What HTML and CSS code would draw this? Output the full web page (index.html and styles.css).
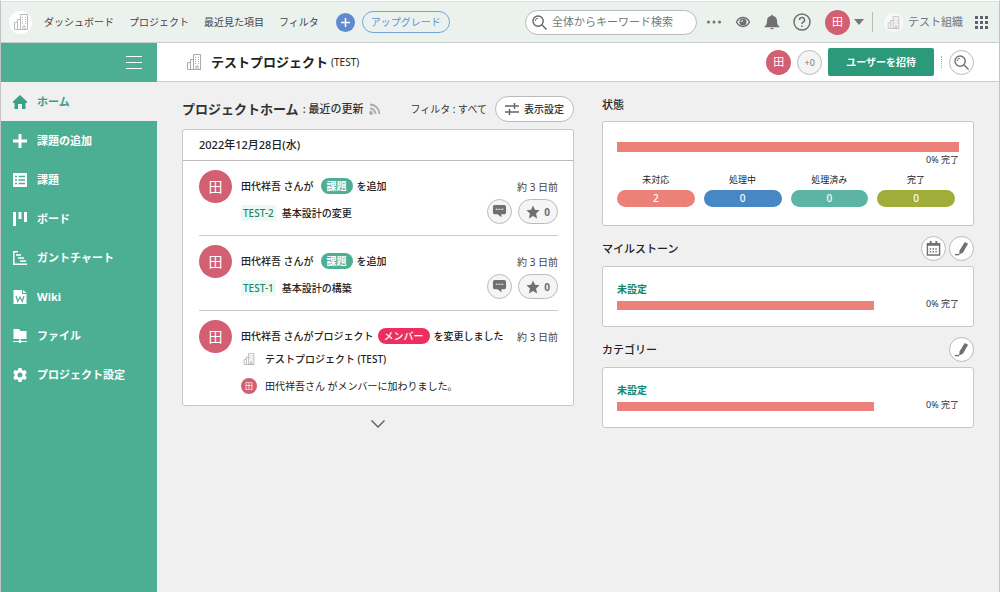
FILE: index.html
```html
<!DOCTYPE html>
<html lang="ja">
<head>
<meta charset="utf-8">
<title>テストプロジェクト</title>
<link rel="stylesheet" href="styles.css">
</head>
<body>
<svg class="defs" aria-hidden="true">
  <symbol id="building" viewBox="0 0 16 16"><g fill="none" stroke="currentColor"><path d="M7.500 15.500V.5h7v15zM7.500 5.500h-3v10M4.500 8.500h-3v7h13M10 15v-3h2v3"/><path stroke-dasharray="1 1" d="M9.500 3v7M12.500 3v7"/></g></symbol>
  <symbol id="search" viewBox="0 0 16 16"><g fill="none" stroke="currentColor" stroke-width="1.500"><circle cx="6.500" cy="6.500" r="5.500"/><path d="M10.500 10.500l5 5"/><path stroke-width="1" d="M3.500 6.500a3 3 0 0 1 3-3"/></g></symbol>
  <symbol id="comment" viewBox="0 0 16 16"><path fill="currentColor" d="M3 1h10a2 2 0 0 1 2 2v6a2 2 0 0 1-2 2h-3v3l-4-3H3a2 2 0 0 1-2-2V3a2 2 0 0 1 2-2z"/><path fill="#fff" d="M4 5h2v1H4zM7 5h2v1H7zM10 5h2v1h-2z"/></symbol>
  <symbol id="star" viewBox="0 0 16 16"><path fill="currentColor" d="M8 .5l2.200 5 5.300.5-4 3.700 1.200 5.800L8 12.600l-4.700 2.900 1.200-5.800-4-3.700 5.300-.5z"/></symbol>
  <symbol id="pencil" viewBox="0 0 16 16"><path fill="currentColor" d="M11.500 1l3.500 1.800-5.500 9.700-4 2 .4-4.300z"/><path fill="none" stroke="currentColor" stroke-width="1.500" d="M1 14.500h4.500"/></symbol>
</svg>

<header class="topbar">
  <a class="round-logo" href="#" aria-label="スペース"><svg class="icon16"><use href="#building"/></svg></a>
  <nav class="topnav">
    <a href="#">ダッシュボード</a>
    <a href="#">プロジェクト</a>
    <a href="#">最近見た項目</a>
    <a href="#">フィルタ</a>
  </nav>
  <button class="add" aria-label="追加"><svg viewBox="0 0 19 19"><path d="M9.500 5v9M5 9.500h9" stroke="#fff" stroke-width="1.500"/></svg></button>
  <button class="upgrade">アップグレード</button>
  <label class="search"><svg class="icon16"><use href="#search"/></svg><input type="text" aria-label="検索" placeholder="全体からキーワード検索"></label>
  <div class="tools">
    <button aria-label="その他"><svg class="icon16" viewBox="0 0 16 16" fill="currentColor"><circle cx="2.500" cy="8" r="1.500"/><circle cx="8" cy="8" r="1.500"/><circle cx="13.500" cy="8" r="1.500"/></svg></button>
    <button aria-label="ウォッチ"><svg class="icon16" viewBox="0 0 16 16"><path fill="none" stroke="currentColor" stroke-width="1.500" d="M1.500 8C4.500 2 11.500 2 14.500 8 11.500 14 4.500 14 1.500 8z"/><circle cx="8" cy="8" r="3.500" fill="currentColor"/><path fill="none" stroke="#fff" d="M6.500 8A1.500 1.500 0 0 1 8 6.500"/></svg></button>
    <button aria-label="お知らせ"><svg class="icon16" viewBox="0 0 16 16" fill="currentColor"><path d="M8 .5l1.300 1.500c2.700.8 3.700 2.500 3.700 5 0 3 1 4.500 2.500 5.500v.8H.5v-.8C2 11.500 3 10 3 7c0-2.500 1-4.200 3.700-5zM6 14h4q-2 2.500-4 0z"/></svg></button>
    <button aria-label="ヘルプ"><svg class="icon18" viewBox="0 0 18 18" fill="none" stroke="currentColor" stroke-width="1.500"><circle cx="9" cy="9" r="8"/><path d="M6.500 7a2.500 2.500 0 1 1 3.500 2.200q-1 .5-1 1.800M9 12.500V14"/></svg></button>
  </div>
  <button class="me" aria-label="アカウント"><span class="avatar avatar-m">田</span><span class="caret"></span></button>
  <a class="org" href="#"><span class="org-logo"><svg><use href="#building"/></svg></span>テスト組織</a>
  <button class="apps" aria-label="アプリ"><svg viewBox="0 0 13 13" fill="currentColor"><path d="M0 0h3v3H0zM5 0h3v3H5zM10 0h3v3h-3zM0 5h3v3H0zM5 5h3v3H5zM10 5h3v3h-3zM0 10h3v3H0zM5 10h3v3H5zM10 10h3v3h-3z"/></svg></button>
</header>

<div class="shell">
  <aside class="sidebar">
    <div class="side-head"><button aria-label="メニュー"><svg viewBox="0 0 16 16" fill="none" stroke="#fff"><path d="M0 1.500h16M0 7.500h16M0 13.500h16"/></svg></button></div>
    <nav class="sidenav">
      <a class="active" href="#"><svg viewBox="0 0 14 14" fill="currentColor"><path d="M7 0l7 6.500V8h-1.500v6H9V9H5v5H1.500V8H0V6.500z"/></svg>ホーム</a>
      <a href="#"><svg viewBox="0 0 14 14"><path d="M7 0v14M0 7h14" stroke="currentColor" stroke-width="3"/></svg>課題の追加</a>
      <a href="#"><svg viewBox="0 0 14 14"><path fill="currentColor" d="M0 0h14v14H0z"/><path d="M2 3.500h2M5.500 3.500H12M2 7h2M5.500 7H12M2 10.500h2M5.500 10.500H12" stroke="#4caf93" stroke-width="1.500"/></svg>課題</a>
      <a href="#"><svg viewBox="0 0 14 14" fill="currentColor"><path d="M0 0h3v14H0zM5.500 0h3v7h-3zM11 0h3v10h-3z"/></svg>ボード</a>
      <a href="#"><svg viewBox="0 0 14 14" fill="none" stroke="currentColor" stroke-width="1.500"><path d="M5 .8H.8v12.500H14M3 4h5M5 7h6M7 10h6"/></svg>ガントチャート</a>
      <a href="#"><svg viewBox="0 0 14 14"><path fill="currentColor" d="M.5 0H9v4h4.500v10H.5zM10 0l3.500 3H10z"/><path d="M3 6l1.800 5.500L7 7l2.200 4.500L11 6" fill="none" stroke="#4caf93" stroke-width="1.200"/></svg>Wiki</a>
      <a href="#"><svg viewBox="0 0 14 14"><path fill="currentColor" d="M.5 0H6l1.500 2h6v8H.5z"/><path d="M0 12.500h14M7 10v2" stroke="currentColor"/><circle cx="7" cy="12.500" r="1.500" fill="currentColor"/></svg>ファイル</a>
      <a href="#"><svg viewBox="0 0 14 14" fill="currentColor"><path fill-rule="evenodd" d="M5.500 0h3l.5 2 1.300.7 2-.6 1.500 2.600L12.400 6v2l1.400 1.300-1.500 2.600-2-.6L9 12l-.5 2h-3L5 12l-1.300-.7-2 .6L.2 9.300 1.600 8V6L.2 4.700l1.500-2.600 2 .6L5 2zM7 4.500a2.500 2.500 0 1 0 0 5 2.500 2.500 0 0 0 0-5z"/></svg>プロジェクト設定</a>
    </nav>
  </aside>

  <div class="page">
    <div class="project-bar">
      <svg class="icon16 pale"><use href="#building"/></svg>
      <h1>テストプロジェクト</h1><span class="key">(TEST)</span>
      <div class="project-tools">
        <span class="avatar avatar-m">田</span>
        <span class="more-users">+0</span>
        <button class="invite">ユーザーを招待</button>
        <span class="dots"></span>
        <button class="circle" aria-label="検索"><svg><use href="#search"/></svg></button>
      </div>
    </div>

    <main class="columns">
      <section class="feed">
        <div class="feed-head">
          <h2>プロジェクトホーム</h2><span class="sub">: 最近の更新</span>
          <svg class="rss" viewBox="0 0 12 12" fill="none" stroke="currentColor" stroke-width="1.800"><circle cx="2" cy="10" r="1"/><path d="M1 5.500A5.500 5.500 0 0 1 6.500 11M1 1.500A9.500 9.500 0 0 1 10.500 11"/></svg>
          <span class="filter">フィルタ : すべて</span>
          <button class="display"><svg viewBox="0 0 14 14" stroke="currentColor" stroke-width="1.500"><path d="M0 4h14M9.500 1v6M0 10h14M4.500 7v6"/></svg>表示設定</button>
        </div>
        <div class="card">
          <h3>2022年12月28日(水)</h3>
          <ul class="updates">
            <li>
              <span class="avatar avatar-l">田</span>
              <div class="body">
                <p class="line">田代祥吾 さんが <span class="tag green">課題</span> を追加</p>
                <p class="line"><a class="issue" href="#">TEST-2</a>基本設計の変更</p>
              </div>
              <div class="side"><time>約 3 日前</time>
                <div class="actions"><button class="circle grey" aria-label="コメント"><svg><use href="#comment"/></svg></button><button class="stars"><svg><use href="#star"/></svg>0</button></div>
              </div>
            </li>
            <li>
              <span class="avatar avatar-l">田</span>
              <div class="body">
                <p class="line">田代祥吾 さんが <span class="tag green">課題</span> を追加</p>
                <p class="line"><a class="issue" href="#">TEST-1</a>基本設計の構築</p>
              </div>
              <div class="side"><time>約 3 日前</time>
                <div class="actions"><button class="circle grey" aria-label="コメント"><svg><use href="#comment"/></svg></button><button class="stars"><svg><use href="#star"/></svg>0</button></div>
              </div>
            </li>
            <li>
              <span class="avatar avatar-l">田</span>
              <div class="body tight">
                <p class="line">田代祥吾 さんがプロジェクト<span class="tag red">メンバー</span>を変更しました</p>
                <p class="line detail"><span class="slot"><svg class="mini"><use href="#building"/></svg></span>テストプロジェクト (TEST)</p>
                <p class="line detail soft"><span class="avatar avatar-s">田</span>田代祥吾さん がメンバーに加わりました。</p>
              </div>
              <div class="side"><time>約 3 日前</time></div>
            </li>
          </ul>
        </div>
        <button class="expand" aria-label="もっと見る"><svg viewBox="0 0 14 8" fill="none" stroke="currentColor" stroke-width="1.500"><path d="M.5.5L7 7l6.500-6.500"/></svg></button>
      </section>

      <section class="summary">
        <div class="sum-head first"><h2>状態</h2></div>
        <div class="card status">
          <div class="bar"></div>
          <p class="rate">0% 完了</p>
          <dl class="states">
            <div><dt>未対応</dt><dd class="s1">2</dd></div>
            <div><dt>処理中</dt><dd class="s2">0</dd></div>
            <div><dt>処理済み</dt><dd class="s3">0</dd></div>
            <div><dt>完了</dt><dd class="s4">0</dd></div>
          </dl>
        </div>
        <div class="sum-head"><h2>マイルストーン</h2>
          <button class="circle" aria-label="カレンダー"><svg viewBox="0 0 16 16"><path fill="none" stroke="currentColor" stroke-width="1.500" d="M1.500 3h13v12h-13z"/><path fill="currentColor" d="M1 2h14v3H1zM4 0h2v3H4zM10 0h2v3h-2z"/><path stroke="currentColor" stroke-width="1.500" stroke-dasharray="1.500 1.500" d="M4 8.500h8M4 11.500h8"/></svg></button>
          <button class="circle" aria-label="マイルストーンを編集"><svg><use href="#pencil"/></svg></button></div>
        <div class="card progress"><div class="track"><a href="#">未設定</a><div class="bar thin"></div></div><p class="rate">0% 完了</p></div>
        <div class="sum-head"><h2>カテゴリー</h2>
          <button class="circle" aria-label="カテゴリーを編集"><svg><use href="#pencil"/></svg></button></div>
        <div class="card progress"><div class="track"><a href="#">未設定</a><div class="bar thin"></div></div><p class="rate">0% 完了</p></div>
      </section>
    </main>
  </div>
</div>
</body>
</html>
```

FILE: styles.css
```css
* { box-sizing: border-box; margin: 0; padding: 0; }

body {
  display: flex;
  flex-direction: column;
  min-height: 100vh;
  border: 1px solid #c4c4c4;
  border-top-color: #fff;
  border-bottom: 0;
  background: #f0f0f0;
  color: #222;
  font: 10px/16px "Noto Sans", "Noto Sans CJK JP", sans-serif;
  white-space: nowrap;
}

button, input { font: inherit; color: inherit; background: none; border: 0; }
button { display: flex; align-items: center; justify-content: center; flex-shrink: 0; cursor: pointer; }
a { color: inherit; text-decoration: none; }
svg { display: block; flex-shrink: 0; }
ul { list-style: none; }
.defs { position: absolute; width: 0; height: 0; }
.icon16 { width: 16px; height: 16px; }
.icon18 { width: 18px; height: 18px; }

.avatar {
  display: flex;
  align-items: center;
  justify-content: center;
  flex-shrink: 0;
  border-radius: 50%;
  background: #d35f72;
  color: #fff;
  font-weight: 400;
}
.avatar-l { width: 33px; height: 33px; font-size: 14px; }
.avatar-m { width: 25px; height: 25px; font-size: 11px; }
.avatar-s { width: 16px; height: 16px; font-size: 8px; }

/* Top bar */
.topbar {
  display: flex;
  align-items: center;
  height: 42px;
  padding: 0 11px 0 8px;
  border-top: 1px solid #ddd;
  border-bottom: 1px solid #c8cecb;
  background: #ebf2ee;
  color: #444;
}
.round-logo {
  display: flex;
  align-items: center;
  justify-content: center;
  width: 23px;
  height: 23px;
  border-radius: 50%;
  background: #fff;
  color: #bbb;
}
.topnav { display: flex; gap: 15px; margin-left: 12px; }
.add { width: 19px; height: 19px; margin-left: 17px; border-radius: 50%; background: #6189d0; }
.add svg { width: 19px; height: 19px; }
.upgrade {
  height: 22px;
  padding: 0 8px;
  margin-left: 7px;
  border: 1px solid #76a5dc;
  border-radius: 11px;
  color: #5b93d6;
}
.search {
  display: flex;
  align-items: center;
  gap: 5px;
  width: 172px;
  height: 25px;
  margin-left: auto;
  padding: 0 6px;
  border: 1px solid #bbb;
  border-radius: 13px;
  background: #fff;
  color: #666;
}
.search .icon16 { width: 15px; height: 15px; }
.search input { flex: 1; min-width: 0; outline: 0; font-size: 11px; }
.search input::placeholder { color: #777; opacity: 1; }
.tools { display: flex; align-items: center; gap: 13px; margin-left: 9px; color: #707070; }
.me { gap: 4px; margin-left: 14px; }
.caret { border: 5px solid transparent; border-top: 6px solid #777; border-bottom: 0; }
.org {
  display: flex;
  align-items: center;
  gap: 5px;
  margin-left: 8px;
  padding-left: 11px;
  border-left: 1px solid #bbb;
  color: #6c7480;
  font-size: 11px;
  line-height: 20px;
}
.org-logo {
  display: flex;
  align-items: center;
  justify-content: center;
  width: 19px;
  height: 19px;
  border-radius: 50%;
  background: #f8f8f8;
  color: #bbb;
}
.org-logo svg { width: 13px; height: 13px; }
.apps { margin-left: 12px; color: #596173; }
.apps svg { width: 13px; height: 13px; }

/* Sidebar */
.shell { display: flex; flex: 1; }
.sidebar { flex: 0 0 156px; background: #4caf93; color: #fff; }
.side-head { display: flex; align-items: center; justify-content: flex-end; height: 39px; padding-right: 15px; }
.side-head svg { width: 16px; height: 16px; }
.sidenav a {
  display: flex;
  align-items: center;
  gap: 10px;
  height: 39px;
  padding-left: 12px;
  font-size: 11px;
  font-weight: 700;
}
.sidenav svg { width: 14px; height: 14px; }
.sidenav .active { background: #f0f0f0; color: #3aa183; }

/* Project bar */
.page { flex: 1; min-width: 0; }
.project-bar {
  display: flex;
  align-items: center;
  height: 39px;
  padding: 0 25px 0 29px;
  border-bottom: 1px solid #ccc;
  background: #fff;
}
.pale { color: #aaa; }
h1, .feed-head h2 { font-size: 13px; line-height: 20px; }
h1 { margin-left: 9px; }
.key { margin-left: 3px; }
.project-tools { display: flex; align-items: center; gap: 6px; margin-left: auto; }
.more-users {
  width: 25px;
  height: 25px;
  border: 1px solid #bbb;
  border-radius: 50%;
  background: #f4f4f4;
  color: #777;
  font-size: 9px;
  line-height: 23px;
  text-align: center;
}
.invite {
  height: 28px;
  padding: 0 18px;
  border-radius: 2px;
  background: #2c9a7a;
  color: #fff;
  font-weight: 700;
}
.dots { height: 12px; margin: 0 1px; border-left: 1px dotted #aaa; }
.circle {
  width: 25px;
  height: 25px;
  border: 1px solid #bbb;
  border-radius: 50%;
  background: #fff;
  color: #707070;
}
.circle svg { width: 15px; height: 15px; }
.circle.grey { background: #f5f5f5; }

/* Columns */
.columns {
  display: grid;
  grid-template-columns: 392fr 372fr;
  gap: 28px;
  padding: 14px 25px;
  align-items: start;
}
.card { border: 1px solid #c8c8c8; border-radius: 3px; background: #fff; }
.feed-head { display: flex; align-items: center; height: 26px; margin-bottom: 7px; color: #333; }
.feed-head .sub { margin-left: 4px; font-size: 11px; font-weight: 500; }
.rss { width: 12px; height: 12px; margin-left: 6px; color: #aaa; }
.filter { margin-left: auto; }
.display {
  gap: 5px;
  height: 26px;
  margin-left: 8px;
  padding: 0 9px;
  border: 1px solid #bbb;
  border-radius: 13px;
  background: #fff;
  font-weight: 500;
}
.display svg { width: 14px; height: 14px; color: #666; }
.feed h3 {
  padding: 0 16px;
  border-bottom: 1px solid #bbb;
  font-size: 11px;
  font-weight: 500;
  line-height: 30px;
}
.updates { padding: 0 15px 0 16px; }
.updates li { display: flex; gap: 9px; min-height: 75px; padding: 9px 0; border-bottom: 1px solid #ccc; }
.updates li:last-child { padding-bottom: 11px; border-bottom: 0; }
.body { display: flex; flex-direction: column; flex: 1; gap: 11px; padding-top: 8px; }
.body.tight { gap: 7px; }
.line { display: flex; align-items: center; min-height: 16px; font-weight: 500; }
.tag { padding: 0 6px; border-radius: 8px; color: #fff; }
.green { margin: 0 4px 0 7px; background: #4caf93; font-weight: 700; }
.red { margin: 0 4px; background: #ee2e5e; }
.issue { margin-right: 6px; padding: 0 2px; background: #edf9f5; color: #1d8668; }
.detail { gap: 8px; }
.detail.soft { margin-top: 4px; font-weight: 400; }
.slot { display: flex; justify-content: center; width: 16px; }
.mini { width: 12px; height: 12px; color: #aaa; }
.side { display: flex; flex-direction: column; align-items: flex-end; gap: 4px; padding-top: 9px; color: #444; }
.actions { display: flex; gap: 6px; }
.stars {
  gap: 4px;
  height: 25px;
  padding: 0 7px;
  border: 1px solid #bbb;
  border-radius: 13px;
  background: #f5f5f5;
  color: #707070;
  font-weight: 700;
}
.stars svg { width: 14px; height: 14px; }
.expand { width: 100%; height: 36px; color: #666; }
.expand svg { width: 14px; height: 8px; }

/* Summary */
.sum-head { display: flex; align-items: center; gap: 3px; height: 25px; margin: 10px 0 5px; }
.sum-head.first { height: 18px; margin: 0 0 7px; }
.sum-head h2 { flex: 1; font-size: 11px; font-weight: 500; }
.summary .card { padding: 14px; }
.bar { height: 10px; background: #eb8179; }
.bar.thin { height: 9px; }
.rate { color: #333; font-size: 9px; text-align: right; }
.summary .status { padding: 20px 14px 18px; }
.states { display: grid; grid-template-columns: repeat(4, 1fr); gap: 9px; margin: 4px 4px 0 0; text-align: center; }
.states dt { font-size: 9px; }
.states dd { margin-top: 2px; border-radius: 9px; color: #fff; font-weight: 500; line-height: 17px; }
.s1 { background: #eb8179; }
.s2 { background: #4787c4; }
.s3 { background: #5cb4a5; }
.s4 { background: #a1ad39; }
.progress { display: flex; justify-content: space-between; align-items: flex-end; height: 61px; }
.track { width: 75%; height: 100%; }
.track a { display: block; margin-bottom: 4px; color: #16876a; font-weight: 700; }
```
